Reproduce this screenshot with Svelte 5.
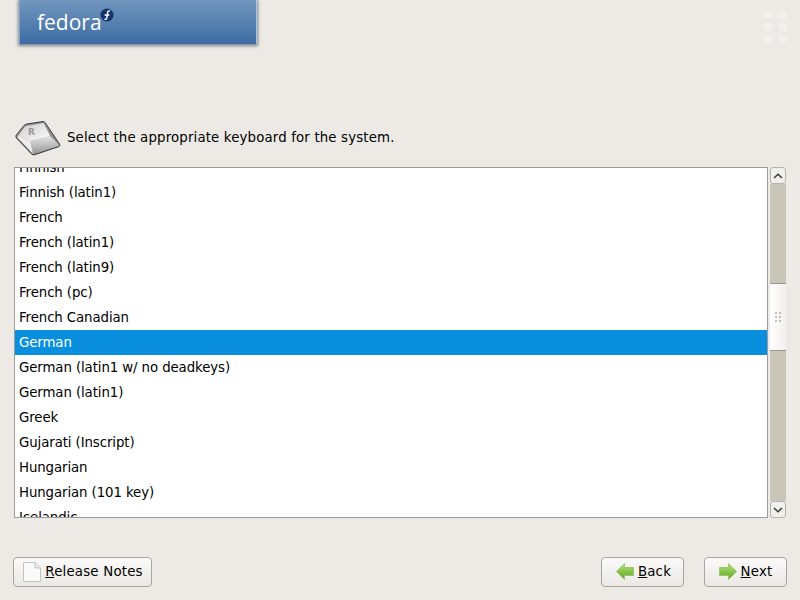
<script lang="ts">
  const layouts = [
    'Finnish',
    'Finnish (latin1)',
    'French',
    'French (latin1)',
    'French (latin9)',
    'French (pc)',
    'French Canadian',
    'German',
    'German (latin1 w/ no deadkeys)',
    'German (latin1)',
    'Greek',
    'Gujarati (Inscript)',
    'Hungarian',
    'Hungarian (101 key)',
    'Icelandic'
  ];
  let selected = $state('German');
</script>

<div class="page">
  <header class="top">
    <div class="banner">
      <span class="wordmark">fedora</span>
      <svg class="infinity" width="14" height="14" viewBox="0 0 14 14" aria-hidden="true">
        <circle cx="7" cy="7" r="6.5" fill="#12336b" />
        <path d="M4.500 11.200c1.600.3 2.300-.5 2.500-2L7.600 4.600c.2-1.400 1-2 2.500-1.600M4.600 7h4.800" fill="none" stroke="#fff" stroke-width="1.400" />
      </svg>
    </div>
    <div class="dots" aria-hidden="true">
      {#each Array(6) as _}
        <span class="dot"></span>
      {/each}
    </div>
  </header>

  <div class="prompt">
    <svg width="46" height="36" viewBox="0 0 46 36" aria-hidden="true">
      <defs>
        <linearGradient id="keytop" x1="0" y1="0" x2="1" y2="1">
          <stop offset="0" stop-color="#cfcfcf" />
          <stop offset="1" stop-color="#fbfbfb" />
        </linearGradient>
        <linearGradient id="keyfront" x1="0" y1="0" x2="0" y2="1">
          <stop offset="0" stop-color="#e4e4e4" />
          <stop offset="1" stop-color="#989898" />
        </linearGradient>
      </defs>
      <path d="M1 15.500 9 5.500Q10 4.500 12 4L28 1.500Q29.500 1.500 30 2.500L44.500 24Q45.500 26 44 26.500L19.500 34.800Q18 35.200 16.500 34L1.500 18Q.5 16.500 1 15.500Z" fill="#8f8f8f" stroke="#3c3c3c" stroke-width="1" stroke-linejoin="round" />
      <path d="M3.700 15 10.300 6.300 28.700 3 35.300 16.300 15.300 21.300Z" fill="url(#keytop)" />
      <path d="M15.300 21.300 35.300 16.300 44.500 25.500 18 33.800Z" fill="url(#keyfront)" />
      <path d="M3.700 15 15.300 21.300 18 33.800 2.500 17.500Z" fill="#ececec" />
      <text x="13" y="15" class="keycap">R</text>
    </svg>
    <span>Select the appropriate keyboard for the system.</span>
  </div>

  <div class="listrow">
    <div class="list">
      <ul>
        {#each layouts as name}
          <li class:selected={name === selected}>
            <button type="button" onclick={() => (selected = name)}>{name}</button>
          </li>
        {/each}
      </ul>
    </div>

    <div class="scrollbar" aria-hidden="true">
      <div class="step">
        <svg width="10" height="6" viewBox="0 0 10 6"><path d="M1 5 5 1.300 9 5" fill="none" stroke="#3a3a3a" stroke-width="1.500" /></svg>
      </div>
      <div class="trough before"></div>
      <div class="thumb">
        <div class="grip">
          {#each Array(6) as _}
            <span></span>
          {/each}
        </div>
      </div>
      <div class="trough"></div>
      <div class="step">
        <svg width="10" height="6" viewBox="0 0 10 6"><path d="M1 1 5 4.700 9 1" fill="none" stroke="#3a3a3a" stroke-width="1.500" /></svg>
      </div>
    </div>
  </div>

  <footer class="actions">
    <button type="button" class="btn notes">
      <svg width="20" height="22" viewBox="0 0 20 22" aria-hidden="true">
        <path d="M1.500 1.500H13L18.500 7V20.500H1.500Z" fill="#fafafa" stroke="#c4c4bf" />
        <path d="M13 1.500V7H18.500" fill="#e6e6e2" stroke="#c4c4bf" />
      </svg>
      <span><u>R</u>elease Notes</span>
    </button>
    <div class="spacer"></div>
    <button type="button" class="btn nav back">
      <svg width="18" height="18" viewBox="0 0 18 18" aria-hidden="true">
        <defs>
          <linearGradient id="arrow" x1="0" y1="0" x2="0" y2="1">
            <stop offset="0" stop-color="#b4e27c" />
            <stop offset="1" stop-color="#5fa61f" />
          </linearGradient>
        </defs>
        <path d="M.5 8.500 8.500.5V4.500H17.500V12.500H8.500V16.500Z" fill="url(#arrow)" stroke="#8fc25f" stroke-width=".8" />
      </svg>
      <span><u>B</u>ack</span>
    </button>
    <button type="button" class="btn nav">
      <svg width="18" height="18" viewBox="0 0 18 18" aria-hidden="true">
        <path d="M17.500 8.500 9.500.5V4.500H.5V12.500H9.500V16.500Z" fill="url(#arrow)" stroke="#8fc25f" stroke-width=".8" />
      </svg>
      <span><u>N</u>ext</span>
    </button>
  </footer>
</div>

<style>
  :global(body) {
    margin: 0;
    background: #edeae6;
  }

  .page {
    width: 800px;
    height: 600px;
    display: flex;
    flex-direction: column;
    overflow: hidden;
    font: 13.33px/1 "DejaVu Sans", sans-serif;
    color: #000;
  }

  .top {
    height: 120px;
    display: flex;
    justify-content: space-between;
    align-items: flex-start;
    padding: 0 12px 0 19px;
    box-sizing: border-box;
    flex-shrink: 0;
  }

  .banner {
    position: relative;
    width: 238px;
    height: 44px;
    box-sizing: border-box;
    padding: 11px 0 0 17px;
    background: linear-gradient(#7297bf, #3c6ba2);
    border-left: 1px solid #86a6c8;
    border-right: 1px solid #a9c3dc;
    box-shadow: 0 1px 3px 1px rgba(30, 45, 65, 0.55);
  }

  .wordmark {
    font: 21px/22px "Open Sans", sans-serif;
    color: #fff;
  }

  .infinity {
    position: absolute;
    left: 80px;
    top: 8px;
  }

  .dots {
    margin-top: 10px;
    display: grid;
    grid-template-columns: 11px 11px;
    gap: 2px 3px;
  }

  .dot {
    width: 11px;
    height: 10px;
    border-radius: 50%;
    background: #f2efed;
    box-shadow: 0 0 1px #dcd8d3;
  }

  .prompt {
    height: 47px;
    flex-shrink: 0;
    display: flex;
    align-items: flex-start;
    gap: 6px;
    padding-left: 15px;
  }

  .prompt span {
    margin-top: 10px;
    line-height: 15px;
    letter-spacing: 0.15px;
  }

  .keycap {
    font: bold 9px "DejaVu Sans", sans-serif;
    fill: #9a9a9a;
  }

  .listrow {
    height: 351px;
    flex-shrink: 0;
    display: flex;
    padding: 0 14px;
    gap: 2px;
  }

  .list {
    flex: 1;
    border: 1px solid #9d9c9b;
    background: #fff;
    overflow: hidden;
  }

  .list ul {
    list-style: none;
    margin: -13px 0 0;
    padding: 0;
  }

  .list li {
    height: 25px;
  }

  .list button {
    display: block;
    width: 100%;
    height: 100%;
    padding: 0 0 0 4px;
    border: 0;
    background: none;
    font: inherit;
    color: inherit;
    text-align: left;
    letter-spacing: -0.1px;
  }

  .list li.selected {
    background: #0a8ede;
    color: #fff;
  }

  .scrollbar {
    width: 16px;
    display: flex;
    flex-direction: column;
  }

  .step {
    height: 17px;
    flex-shrink: 0;
    display: flex;
    align-items: center;
    justify-content: center;
    box-sizing: border-box;
    border: 1px solid #b7b3ab;
    border-radius: 3px;
    background: #f2f0ed;
  }

  .trough {
    flex: 1;
    background: #c9c5b8;
  }

  .trough.before {
    flex: 0 0 99px;
  }

  .thumb {
    height: 68px;
    flex-shrink: 0;
    display: flex;
    align-items: center;
    justify-content: center;
    box-sizing: border-box;
    border-top: 1px solid #9a968d;
    border-bottom: 1px solid #9a968d;
    background: linear-gradient(90deg, #fff, #f1efec);
  }

  .grip {
    display: grid;
    grid-template-columns: 2px 2px;
    gap: 2px;
  }

  .grip span {
    width: 2px;
    height: 2px;
    background: #c5c2bc;
  }

  .actions {
    flex: 1;
    display: flex;
    align-items: flex-start;
    padding: 39px 13px 0;
    gap: 20px;
  }

  .spacer {
    flex: 1;
  }

  .btn {
    height: 30px;
    display: flex;
    align-items: center;
    justify-content: center;
    gap: 3px;
    box-sizing: border-box;
    padding: 0;
    border: 1px solid #a9a59d;
    border-radius: 4px;
    background: linear-gradient(#fbfafa, #ebe8e4);
    font: 13.33px "DejaVu Sans", sans-serif;
    color: #000;
  }

  .btn span {
    margin-top: -2px;
    letter-spacing: 0.2px;
  }

  .notes {
    width: 139px;
  }

  .nav {
    width: 83px;
    gap: 4px;
  }

  .back {
    padding-left: 2px;
  }
</style>
